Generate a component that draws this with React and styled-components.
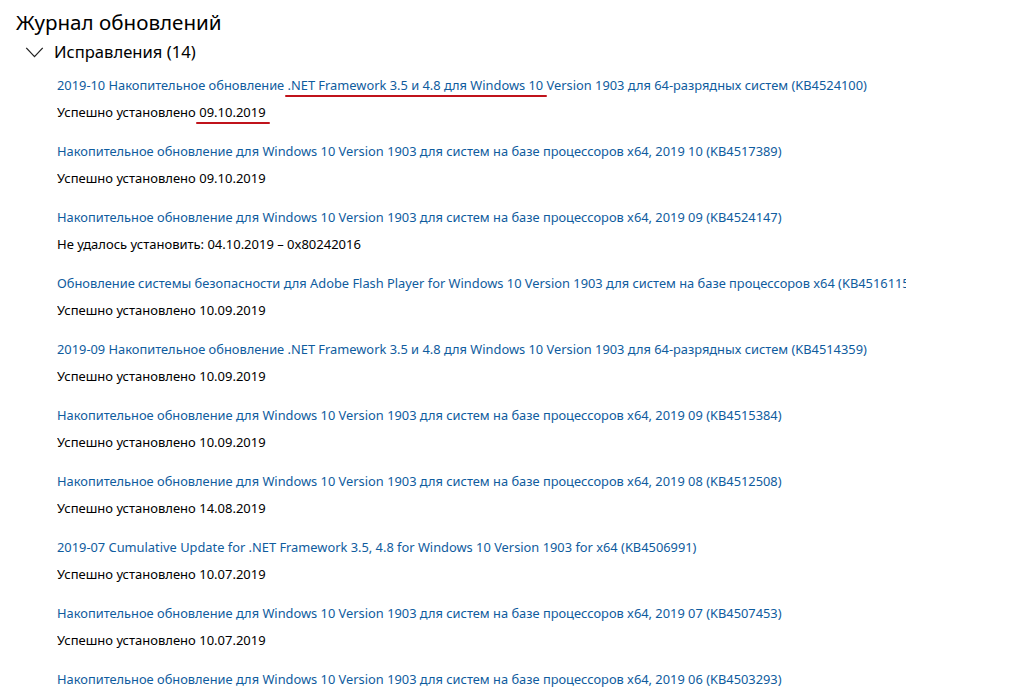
import styled, { createGlobalStyle } from "styled-components";

const GlobalStyle = createGlobalStyle`
  html, body {
    margin: 0;
    background: #fff;
  }
  body {
    font-family: "Noto Sans", "Open Sans", sans-serif;
    color: #000;
  }
`;

const updates = [
  {
    title: [
      "2019-10 Накопительное обновление ",
      { mark: ".NET Framework 3.5 и 4.8 для Windows 10" },
      " Version 1903 для 64-разрядных систем (KB4524100)",
    ],
    status: ["Успешно установлено ", { mark: "09.10.2019" }],
  },
  {
    title: ["Накопительное обновление для Windows 10 Version 1903 для систем на базе процессоров x64, 2019 10 (KB4517389)"],
    status: ["Успешно установлено 09.10.2019"],
  },
  {
    title: ["Накопительное обновление для Windows 10 Version 1903 для систем на базе процессоров x64, 2019 09 (KB4524147)"],
    status: ["Не удалось установить: 04.10.2019 – 0x80242016"],
  },
  {
    title: ["Обновление системы безопасности для Adobe Flash Player for Windows 10 Version 1903 для систем на базе процессоров x64 (KB4516115)"],
    status: ["Успешно установлено 10.09.2019"],
  },
  {
    title: ["2019-09 Накопительное обновление .NET Framework 3.5 и 4.8 для Windows 10 Version 1903 для 64-разрядных систем (KB4514359)"],
    status: ["Успешно установлено 10.09.2019"],
  },
  {
    title: ["Накопительное обновление для Windows 10 Version 1903 для систем на базе процессоров x64, 2019 09 (KB4515384)"],
    status: ["Успешно установлено 10.09.2019"],
  },
  {
    title: ["Накопительное обновление для Windows 10 Version 1903 для систем на базе процессоров x64, 2019 08 (KB4512508)"],
    status: ["Успешно установлено 14.08.2019"],
  },
  {
    title: ["2019-07 Cumulative Update for .NET Framework 3.5, 4.8 for Windows 10 Version 1903 for x64 (KB4506991)"],
    status: ["Успешно установлено 10.07.2019"],
  },
  {
    title: ["Накопительное обновление для Windows 10 Version 1903 для систем на базе процессоров x64, 2019 07 (KB4507453)"],
    status: ["Успешно установлено 10.07.2019"],
  },
  {
    title: ["Накопительное обновление для Windows 10 Version 1903 для систем на базе процессоров x64, 2019 06 (KB4503293)"],
    status: ["Успешно установлено 10.07.2019"],
  },
];

function renderParts(parts) {
  return parts.map((p, i) =>
    typeof p === "string" ? <span key={i}>{p}</span> : <Marked key={i}>{p.mark}</Marked>
  );
}

export default function App() {
  return (
    <>
      <GlobalStyle />
      <Page>
        <Title>Журнал обновлений</Title>
        <Section>
          <Chevron viewBox="0 0 20 12">
            <polyline points="1,1 10,10.5 19,1" />
          </Chevron>
          <SectionName>Исправления (14)</SectionName>
        </Section>
        <List>
          {updates.map((u, i) => (
            <Item key={i}>
              <UpdateLink>{renderParts(u.title)}</UpdateLink>
              <Status>{renderParts(u.status)}</Status>
            </Item>
          ))}
        </List>
      </Page>
    </>
  );
}

const Page = styled.div`
  padding: 8px 0 0 16px;
  height: 695px;
  box-sizing: border-box;
  overflow: hidden;
`;

const Title = styled.h1`
  margin: 0;
  font-size: 20.6px;
  font-weight: 400;
  line-height: 28px;
`;

const Section = styled.div`
  display: flex;
  align-items: center;
  gap: 10px;
  margin: 4px 0 0 9px;
  height: 24px;
`;

const Chevron = styled.svg`
  width: 19px;
  height: 11px;
  fill: none;
  stroke: #222;
  stroke-width: 1.4;
`;

const SectionName = styled.span`
  font-size: 16.6px;
  line-height: 24px;
`;

const List = styled.div`
  margin: 11px 0 0 41px;
  width: 849px;
  overflow: hidden;
`;

const Item = styled.div`
  display: flex;
  flex-direction: column;
  gap: 7px;
  margin-bottom: 19px;
`;

const UpdateLink = styled.a`
  display: block;
  color: #0f5c9e;
  font-size: 12.85px;
  line-height: 20px;
  white-space: nowrap;
  cursor: pointer;
`;

const Status = styled.div`
  font-size: 13px;
  line-height: 20px;
  white-space: nowrap;
`;

const Marked = styled.span`
  position: relative;
  &::after {
    content: "";
    position: absolute;
    left: -3px;
    right: -4px;
    bottom: -3px;
    height: 2.5px;
    border-radius: 2px;
    background: #c0131b;
  }
`;
